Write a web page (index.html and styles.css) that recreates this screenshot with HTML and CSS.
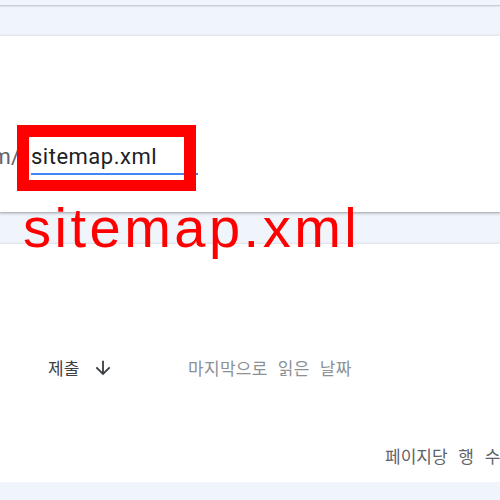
FILE: index.html
```html
<!DOCTYPE html>
<html lang="ko">

<head>
    <meta charset="UTF-8">
    <meta name="viewport" content="width=device-width, initial-scale=1.0">
    <title>Sitemaps</title>
    <link rel="stylesheet" href="styles.css">
</head>

<body>
    <div class="topbar"></div>

    <div class="card addbox">
        <div class="urlrow">
            <div class="prefix"><span>https://example.com/</span></div>
            <div class="urlinput">sitemap.xml</div>
        </div>
        <!-- 주석 표시 -->
        <div class="markbox"></div>
        <div class="marktext">sitemap.xml</div>
    </div>

    <div class="card listbox">
        <div class="thead">
            <div class="col submit">제출
                <svg class="arrow" viewBox="0 0 24 24" width="22" height="22">
                    <path d="M20 12l-1.41-1.41L13 16.17V4h-2v12.17l-5.58-5.59L4 12l8 8 8-8z" fill="#3c4043"/>
                </svg>
            </div>
            <div class="col lastread">마지막으로 읽은 날짜</div>
        </div>
        <div class="tfoot">페이지당 행 수: 10</div>
    </div>
</body>

</html>
```

FILE: styles.css
```css
* {
    margin: 0;
    padding: 0;
    box-sizing: border-box;
}
body {
    background-color: #f0f4fb;
    font-family: Roboto, "Noto Sans CJK KR", sans-serif;
    overflow: hidden;
}
.topbar {
    height: 5px;
    box-shadow: 0 1px 2px 0 rgba(60, 64, 67, 0.3);
}
.card {
    background-color: #fff;
    box-shadow: 0 1px 2px 0 rgba(60, 64, 67, 0.3), 0 1px 3px 1px rgba(60, 64, 67, 0.15);
}
.addbox {
    position: relative;
    margin-top: 31px;
    height: 176px;
    padding-top: 107px;
}
.urlrow {
    display: flex;
    align-items: flex-start;
}
.prefix {
    width: 31px;
    display: flex;
    justify-content: flex-end;
    overflow: hidden;
    white-space: nowrap;
    padding-right: 11px;
    font-size: 22px;
    line-height: 28px;
    color: #5f6368;
}
.urlinput {
    width: 167px;
    font-size: 22px;
    line-height: 28px;
    letter-spacing: 0.5px;
    color: #202124;
    padding-bottom: 2px;
    border-bottom: 2px solid #4285f4;
}
.markbox {
    position: absolute;
    left: 17px;
    top: 89px;
    width: 179px;
    height: 66px;
    border: 12px solid #ff0000;
    border-bottom-width: 11px;
}
.marktext {
    position: absolute;
    z-index: 1;
    left: 23px;
    top: 164px;
    font-family: "Liberation Sans", Arial, sans-serif;
    font-size: 56px;
    line-height: 56px;
    letter-spacing: 3.5px;
    color: #ff0000;
    white-space: nowrap;
}
.listbox {
    margin-top: 32px;
    height: 238px;
    padding-top: 112px;
    font-family: "Noto Sans CJK KR", sans-serif;
    font-size: 17px;
}
.thead {
    display: flex;
    padding-left: 48px;
    line-height: 24px;
}
.col {
    display: flex;
    align-items: center;
}
.submit {
    width: 140px;
    color: #3c4043;
}
.arrow {
    margin-left: 13px;
}
.lastread {
    color: #8c9197;
    letter-spacing: 0.3px;
    word-spacing: 5px;
}
.tfoot {
    margin-top: 64px;
    padding-left: 385px;
    line-height: 24px;
    white-space: nowrap;
    word-spacing: 6px;
    color: #5f6368;
}
```
